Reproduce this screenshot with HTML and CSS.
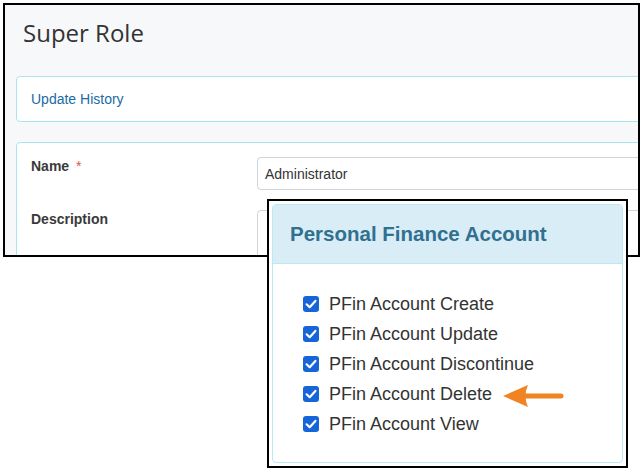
FILE: index.html
```html
<!DOCTYPE html>
<html lang="en">
<head>
<meta charset="utf-8">
<title>Super Role</title>
<link rel="stylesheet" href="styles.css">
</head>
<body>
<div class="shot shot-main">
  <h1 class="page-title">Super Role</h1>
  <div class="cards">
    <div class="card card-link"><a class="link">Update History</a></div>
    <div class="card card-form">
      <div class="form-grid">
        <div class="label">Name <span class="req">*</span></div>
        <div class="input">Administrator</div>
        <div class="label">Description</div>
        <div class="input textarea"></div>
      </div>
    </div>
  </div>
</div>

<div class="shot shot-panel">
  <div class="panel">
    <div class="panel-head">Personal Finance Account</div>
    <div class="panel-body">
      <div class="row"><span class="cb"><svg viewBox="0 0 16 16" width="16" height="16"><path d="M3.6 8.3 L6.7 11.2 L12.4 4.9" fill="none" stroke="#fff" stroke-width="2.2" stroke-linecap="round" stroke-linejoin="round"/></svg></span><span class="txt">PFin Account Create</span></div>
      <div class="row"><span class="cb"><svg viewBox="0 0 16 16" width="16" height="16"><path d="M3.6 8.3 L6.7 11.2 L12.4 4.9" fill="none" stroke="#fff" stroke-width="2.2" stroke-linecap="round" stroke-linejoin="round"/></svg></span><span class="txt">PFin Account Update</span></div>
      <div class="row"><span class="cb"><svg viewBox="0 0 16 16" width="16" height="16"><path d="M3.6 8.3 L6.7 11.2 L12.4 4.9" fill="none" stroke="#fff" stroke-width="2.2" stroke-linecap="round" stroke-linejoin="round"/></svg></span><span class="txt">PFin Account Discontinue</span></div>
      <div class="row"><span class="cb"><svg viewBox="0 0 16 16" width="16" height="16"><path d="M3.6 8.3 L6.7 11.2 L12.4 4.9" fill="none" stroke="#fff" stroke-width="2.2" stroke-linecap="round" stroke-linejoin="round"/></svg></span><span class="txt">PFin Account Delete</span><svg class="arrow" viewBox="0 0 62 24" width="62" height="24"><line x1="22" y1="12" x2="59" y2="12" stroke="#f08322" stroke-width="5" stroke-linecap="round"/><path d="M1 12 L26 1 Q21 12 26 23 Z" fill="#f08322"/></svg></div>
      <div class="row"><span class="cb"><svg viewBox="0 0 16 16" width="16" height="16"><path d="M3.6 8.3 L6.7 11.2 L12.4 4.9" fill="none" stroke="#fff" stroke-width="2.2" stroke-linecap="round" stroke-linejoin="round"/></svg></span><span class="txt">PFin Account View</span></div>
    </div>
  </div>
</div>
</body>
</html>
```

FILE: styles.css
```css
html, body {
  margin: 0;
  padding: 0;
  background: #ffffff;
}

body {
  font-family: "Liberation Sans", Arial, sans-serif;
  color: #333;
}

.shot {
  box-sizing: border-box;
  border: 2px solid #000;
  overflow: hidden;
}

.shot-main {
  margin: 3px 0 0 3px;
  width: 637px;
  height: 254px;
  background: #f7f8fa;
}

.page-title {
  margin: 0;
  padding: 12px 0 0 18px;
  font-family: "Open Sans", "Noto Sans", sans-serif;
  font-weight: 400;
  font-size: 24px;
  line-height: 32px;
  color: #333;
}

.cards {
  padding: 27px 0 0 11px;
  margin-right: -60px;
}

.card {
  box-sizing: border-box;
  background: #fff;
  border: 1px solid #a9e4f1;
  border-radius: 4px;
}

.card-link {
  height: 46px;
  display: flex;
  align-items: center;
  padding-left: 14px;
}

.link {
  font-size: 14px;
  color: #1b6aa5;
}

.card-form {
  margin-top: 20px;
  padding: 14px 14px 20px 14px;
}

.form-grid {
  display: grid;
  grid-template-columns: 226px 1fr;
  row-gap: 20px;
}

.label {
  font-size: 14px;
  font-weight: 700;
  line-height: 16px;
  padding-top: 1px;
  color: #3a3a3a;
}

.req {
  color: #d9534f;
  font-weight: 400;
  margin-left: 3px;
}

.input {
  box-sizing: border-box;
  height: 33px;
  border: 1px solid #ced4da;
  border-radius: 4px;
  background: #fff;
  padding: 0 7px;
  display: flex;
  align-items: center;
  font-size: 14px;
  color: #333;
}

.textarea {
  height: 60px;
}

.shot-panel {
  position: absolute;
  left: 267px;
  top: 199px;
  width: 361px;
  height: 269px;
  background: #fff;
  padding: 3px;
}

.panel {
  box-sizing: border-box;
  height: 100%;
  border: 1px solid #bce8f1;
  border-radius: 4px;
  overflow: hidden;
}

.panel-head {
  box-sizing: border-box;
  height: 59px;
  background: #d9edf7;
  border-bottom: 1px solid #bce8f1;
  display: flex;
  align-items: center;
  padding-left: 17px;
  font-weight: 700;
  font-size: 20.5px;
  color: #31708f;
}

.panel-body {
  padding: 25px 0 0 30px;
}

.row {
  height: 30px;
  display: flex;
  align-items: center;
}

.cb {
  width: 16px;
  height: 16px;
  border-radius: 3px;
  background: #1565d8;
  display: flex;
  margin-right: 10px;
  flex: none;
}

.txt {
  font-size: 18px;
  color: #333;
}

.arrow {
  margin-left: 10px;
  margin-top: 4px;
  flex: none;
}
```
